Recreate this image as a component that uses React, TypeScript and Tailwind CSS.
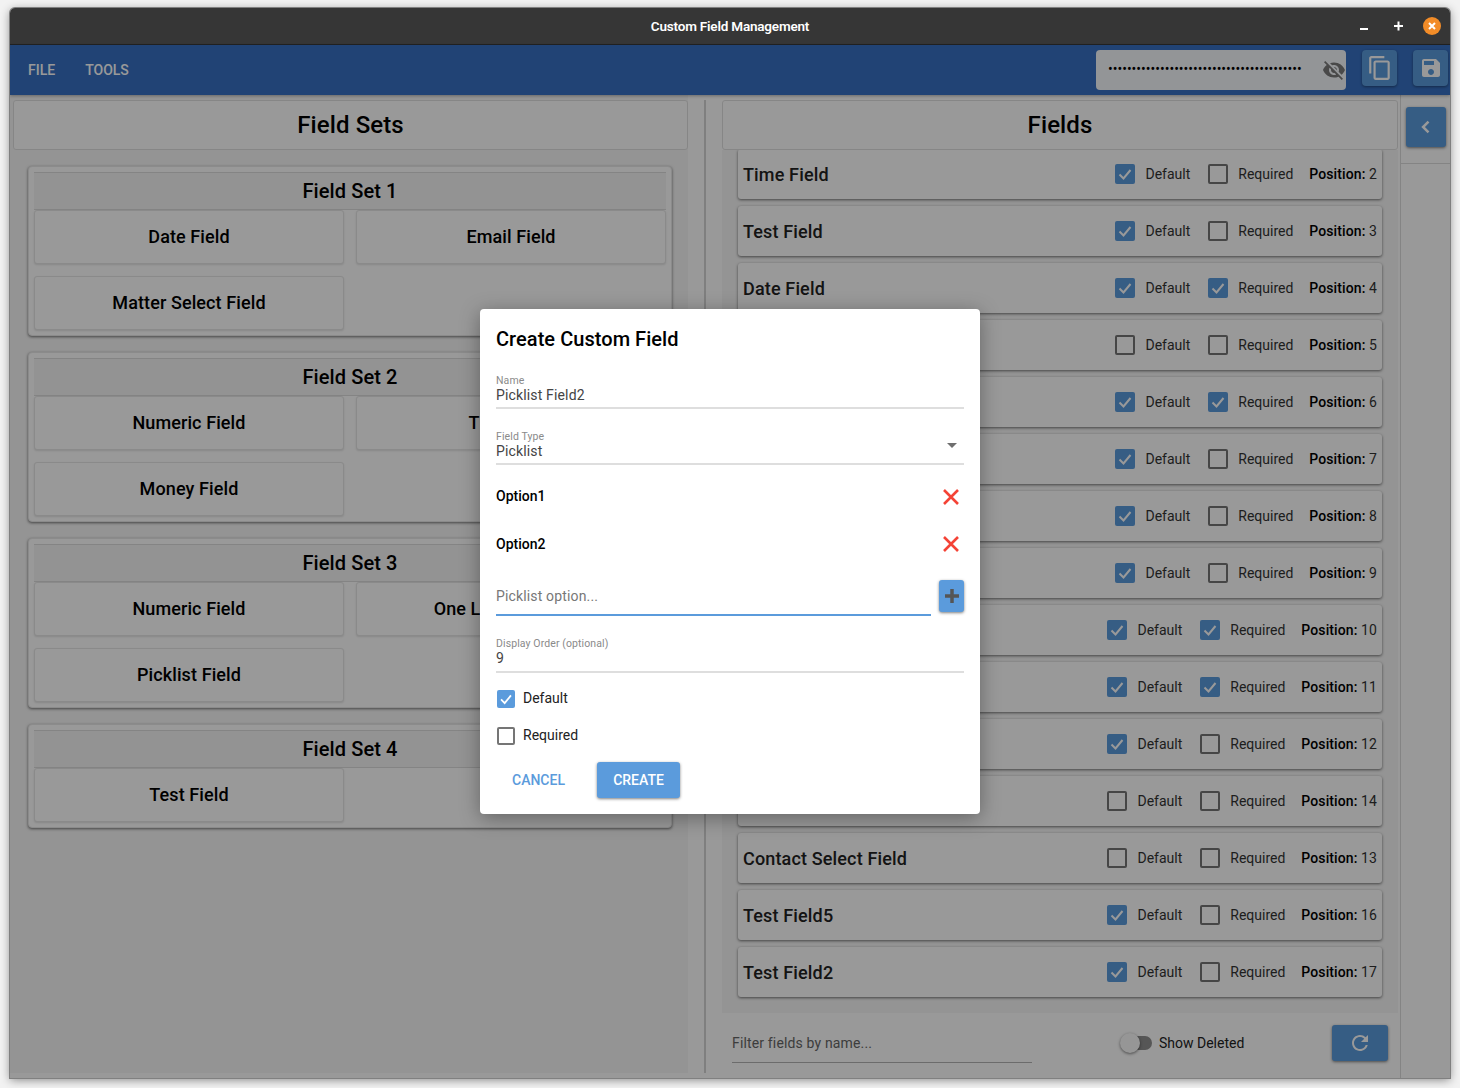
import React from 'react';

// ─── Data ───────────────────────────────────────────────────────────────────

const FIELD_SETS: string[][] = [
  ['Date Field', 'Email Field', 'Matter Select Field'],
  ['Numeric Field', 'Time Field', 'Money Field'],
  ['Numeric Field', 'One Line Text Field', 'Picklist Field'],
  ['Test Field'],
];

interface FieldRow {
  name: string;
  def: boolean;
  req: boolean;
  pos: number;
}

const FIELDS: FieldRow[] = [
  { name: 'Time Field', def: true, req: false, pos: 2 },
  { name: 'Test Field', def: true, req: false, pos: 3 },
  { name: 'Date Field', def: true, req: true, pos: 4 },
  { name: 'Email Field', def: false, req: false, pos: 5 },
  { name: 'Numeric Field', def: true, req: true, pos: 6 },
  { name: 'Money Field', def: true, req: false, pos: 7 },
  { name: 'Picklist Field', def: true, req: false, pos: 8 },
  { name: 'Text Field', def: true, req: false, pos: 9 },
  { name: 'Test Field1', def: true, req: true, pos: 10 },
  { name: 'Test Field3', def: true, req: true, pos: 11 },
  { name: 'Test Field4', def: true, req: false, pos: 12 },
  { name: 'Matter Select Field', def: false, req: false, pos: 14 },
  { name: 'Contact Select Field', def: false, req: false, pos: 13 },
  { name: 'Test Field5', def: true, req: false, pos: 16 },
  { name: 'Test Field2', def: true, req: false, pos: 17 },
];

// ─── Small pieces ───────────────────────────────────────────────────────────

function Check({ on, size = 'w-5 h-5' }: { on: boolean; size?: string }) {
  if (on) {
    return (
      <span className={`${size} shrink-0 rounded-[2px] bg-[#5b9bdc] flex items-center justify-center`}>
        <svg viewBox="0 0 20 20" className="w-full h-full" fill="none" stroke="#fff" strokeWidth="2">
          <path d="M4.5 10.5l4 4 7-8.5" />
        </svg>
      </span>
    );
  }
  return <span className={`${size} shrink-0 rounded-[2px] border-2 border-[#757575] bg-transparent`} />;
}

function DialogField({ label, value, caret, height = 'h-[34px]' }: { label: string; value: string; caret?: boolean; height?: string }) {
  return (
    <div className={`relative ${height} border-b-2 border-[#dedede]`}>
      <div className="text-[10.5px] leading-[12px] tracking-[0.1px] text-[#8a8a8a]">{label}</div>
      <div className="text-[14px] leading-[16px] tracking-[0.15px] text-[#444]">{value}</div>
      {caret && <span className="absolute right-[7px] top-[12px] w-0 h-0 border-x-[5px] border-x-transparent border-t-[5px] border-t-[#6f6f6f]" />}
    </div>
  );
}

function RedX() {
  return (
    <svg viewBox="0 0 16 16" className="w-4 h-4" fill="none" stroke="#f44336" strokeWidth="2.6">
      <path d="M1 1l14 14M15 1L1 15" />
    </svg>
  );
}

// ─── App Component ──────────────────────────────────────────────────────────

export default function App() {
  return (
    <div className="w-[1460px] h-[1088px] bg-[#f2f2f2] pt-2 pl-2.5 overflow-hidden font-['Roboto',sans-serif]">
      <div className="relative w-[1440px] h-[1070px] rounded-t-[5px] overflow-hidden shadow-[0_0_0_1px_#808080,0_2px_10px_rgba(0,0,0,0.45)]">
        {/* ─── Title bar ─── */}
        <div className="relative h-[37px] bg-[#363636] border-b border-[#222] flex items-center justify-center">
          <span className="text-[13.5px] font-semibold text-white tracking-[-0.2px]">Custom Field Management</span>
          <svg viewBox="0 0 88 20" className="absolute right-2 top-2 w-[88px] h-5">
            <path d="M6 13h8" stroke="#fff" strokeWidth="2" />
            <path d="M40 10h9M44.500 5.500v9" stroke="#fff" strokeWidth="2" />
            <circle cx="78" cy="10" r="9" fill="#f28c28" />
            <path d="M75 7l6 6M81 7l-6 6" stroke="#fff" strokeWidth="2" />
          </svg>
        </div>

        {/* ─── App bar ─── */}
        <header className="h-[50px] bg-[#3771c4] flex items-start shadow-[0_1px_3px_rgba(0,0,0,0.3)] relative z-10">
          <nav className="flex items-center h-[50px] pl-[18px] gap-[30px] text-[14px] font-medium text-white">
            <span>FILE</span>
            <span>TOOLS</span>
          </nav>
          <div className="ml-auto flex items-start pt-[5px] pr-[2px]">
            <div className="relative w-[250px] h-10 rounded bg-white/95">
              <input readOnly type="password" value={'x'.repeat(41)} className="w-[220px] h-[38px] pl-3 bg-transparent text-[14px] text-black outline-none" />
              <svg viewBox="0 0 24 24" className="absolute right-0 top-2 w-6 h-6" fill="#7a7a7a">
                <path d="M12 7c2.760 0 5 2.240 5 5 0 .650-.130 1.260-.360 1.830l2.920 2.920c1.510-1.260 2.700-2.890 3.430-4.750-1.730-4.390-6-7.500-11-7.500-1.400 0-2.740.250-3.980.700l2.160 2.160C10.740 7.130 11.350 7 12 7zM2 4.270l2.280 2.280.460.460C3.080 8.300 1.780 10.020 1 12c1.730 4.390 6 7.500 11 7.500 1.550 0 3.030-.300 4.380-.840l.420.420L19.730 22 21 20.730 3.270 3 2 4.270zM7.530 9.800l1.550 1.550c-.050.210-.080.430-.080.650 0 1.660 1.340 3 3 3 .220 0 .440-.030.650-.080l1.550 1.550c-.670.330-1.410.530-2.200.530-2.760 0-5-2.240-5-5 0-.790.200-1.530.530-2.200zm4.310-.780l3.150 3.150.020-.160c0-1.660-1.340-3-3-3l-.170.010z" />
              </svg>
            </div>
            <button className="ml-4 w-[35px] h-9 rounded bg-[#5b9bdc] flex items-center justify-center shadow-[0_1px_3px_rgba(0,0,0,0.4)]">
              <svg viewBox="0 0 24 24" className="w-[26px] h-[26px]" fill="#fff">
                <path d="M16 1H4c-1.100 0-2 .900-2 2v14h2V3h12V1zm3 4H8c-1.100 0-2 .900-2 2v14c0 1.100.900 2 2 2h11c1.100 0 2-.900 2-2V7c0-1.100-.900-2-2-2zm0 16H8V7h11v14z" />
              </svg>
            </button>
            <button className="ml-4 w-[35px] h-9 rounded bg-[#5b9bdc] flex items-center justify-center shadow-[0_1px_3px_rgba(0,0,0,0.4)]">
              <svg viewBox="0 0 24 24" className="w-[24px] h-[24px]" fill="#fff">
                <path d="M17 3H5c-1.110 0-2 .900-2 2v14c0 1.100.890 2 2 2h14c1.100 0 2-.900 2-2V7l-4-4zm-5 16c-1.660 0-3-1.340-3-3s1.340-3 3-3 3 1.340 3 3-1.340 3-3 3zm3-10H5V5h10v4z" />
              </svg>
            </button>
          </div>
        </header>

        {/* ─── Body ─── */}
        <div className="h-[983px] flex bg-white">
          {/* Field sets */}
          <section className="w-[678px] h-[978px] bg-[#f7f7f7] px-[3px] pt-[5px] shrink-0">
            <h2 className="h-[50px] w-[675px] flex items-center justify-center rounded-[3px] border border-[#e0e0e0] bg-white text-[24px] tracking-[0.1px] font-medium text-black">Field Sets</h2>
            <div className="mt-4 ml-[15px] w-[644px] flex flex-col gap-4">
              {FIELD_SETS.map((fields, i) => (
                <div key={i} className="rounded-[4px] bg-white border border-[#e8e8e8] shadow-[0_1px_3px_rgba(0,0,0,0.55)] px-[5px] pt-[5px] pb-[5px]">
                  <div className="h-[38px] flex items-center justify-center border-y border-[#dcdcdc] bg-[#f5f5f5] text-[20px] tracking-[0.1px] font-medium text-black">Field Set {i + 1}</div>
                  <div className="grid grid-cols-2 gap-x-3 gap-y-3">
                    {fields.map((f, j) => (
                      <div key={j} className="h-[54px] pb-px flex items-center justify-center rounded-[3px] border border-[#e6e6e6] bg-white shadow-[0_1px_2px_rgba(0,0,0,0.12)] text-[18px] tracking-[0.1px] font-medium text-black">{f}</div>
                    ))}
                  </div>
                </div>
              ))}
            </div>
          </section>

          {/* Divider */}
          <div className="w-[34px] shrink-0 pl-4 pt-[5px]">
            <div className="w-0.5 h-[973px] bg-[#d4d4d4]" />
          </div>

          {/* Fields */}
          <section className="w-[676px] shrink-0 h-[978px] pt-[5px] flex flex-col">
            <h2 className="relative z-10 h-[50px] shrink-0 flex items-center justify-center rounded-[3px] border border-[#e0e0e0] bg-white text-[24px] tracking-[0.1px] font-medium text-black">Fields</h2>
            <div className="h-[863px] shrink-0 bg-[#f7f7f7] overflow-hidden px-4">
              <div className="-mt-px flex flex-col gap-[7px]">
                {FIELDS.map((f) => (
                  <div key={f.pos} className="h-[50px] shrink-0 flex items-center rounded-[3px] bg-white shadow-[0_1px_3px_rgba(0,0,0,0.55)] pl-[5px] pr-[5px]">
                    <span className="text-[18px] tracking-[0.15px] font-medium text-[#222]">{f.name}</span>
                    <div className="ml-auto flex items-center text-[14px] text-[#333]">
                      <Check on={f.def} />
                      <span className="ml-[10px] mr-[18px]">Default</span>
                      <Check on={f.req} />
                      <span className="ml-[10px] mr-4">Required</span>
                      <span className="tracking-[0.1px]"><b className="font-medium text-black">Position:</b> {f.pos}</span>
                    </div>
                  </div>
                ))}
              </div>
            </div>
            <div className="h-[60px] shrink-0 bg-white flex items-center pl-2.5 relative">
              <div className="w-[300px] h-[37px] mt-[3px] pb-px border-b border-[#b5b5b5] flex items-center text-[14px] tracking-[0.15px] text-[#666]">Filter fields by name...</div>
              <span className="relative ml-[90px] w-[30px] h-3.5 rounded-full bg-[#8f8f8f]">
                <span className="absolute -left-[2px] -top-[3px] w-5 h-5 rounded-full bg-[#fafafa] shadow-[0_1px_3px_rgba(0,0,0,0.5)]" />
              </span>
              <span className="ml-[7px] text-[14px] text-[#222]">Show Deleted</span>
              <button className="absolute left-[610px] top-3 w-14 h-9 rounded-[3px] bg-[#5b9bdc] flex items-center justify-center shadow-[0_1px_3px_rgba(0,0,0,0.5)]">
                <svg viewBox="0 0 24 24" className="w-6 h-6" fill="#fff">
                  <path d="M17.650 6.350A7.958 7.958 0 0 0 12 4c-4.420 0-7.990 3.580-7.990 8s3.570 8 7.990 8c3.730 0 6.840-2.550 7.730-6h-2.080A5.990 5.990 0 0 1 12 18c-3.310 0-6-2.690-6-6s2.690-6 6-6c1.660 0 3.140.690 4.220 1.780L13 11h7V4l-2.350 2.350z" />
                </svg>
              </button>
            </div>
          </section>

          {/* Right rail */}
          <aside className="ml-0.5 w-[50px] shrink-0 border-l border-[#dcdcdc] bg-white">
            <div className="h-[69px] border-b border-[#dcdcdc] pt-3 pl-[5px]">
              <button className="w-10 h-10 rounded-[3px] bg-[#5b9bdc] flex items-center justify-center shadow-[0_1px_3px_rgba(0,0,0,0.5)]">
                <svg viewBox="0 0 24 24" className="w-5 h-5" fill="none" stroke="#fff" strokeWidth="3">
                  <path d="M15 5.500L8.500 12l6.500 6.500" />
                </svg>
              </button>
            </div>
          </aside>
        </div>

        {/* ─── Modal backdrop ─── */}
        <div className="absolute inset-x-0 top-[37px] bottom-0 z-20 bg-black/40" />

        {/* ─── Dialog ─── */}
        <div className="absolute z-30 left-[470px] top-[301px] w-[500px] h-[505px] rounded bg-white shadow-[0_4px_20px_rgba(0,0,0,0.35)] px-4 pt-4">
          <h3 className="text-[20px] leading-7 tracking-[0.05px] font-medium text-black">Create Custom Field</h3>
          <div className="mt-[22px]">
            <DialogField label="Name" value="Picklist Field2" />
          </div>
          <div className="mt-[22px]">
            <DialogField label="Field Type" value="Picklist" caret />
          </div>
          <div className="mt-[15px] h-8 flex items-center justify-between text-[14px] font-medium text-black">
            <span>Option1</span>
            <span className="mr-[5px] mt-0.5"><RedX /></span>
          </div>
          <div className="mt-4 h-8 flex items-center justify-between text-[14px] font-medium text-black">
            <span>Option2</span>
            <span className="mr-[5px]"><RedX /></span>
          </div>
          <div className="mt-3.5 flex items-start gap-2">
            <div className="flex-1 h-[42px] border-b-2 border-[#5b9bdc] pt-[14px] text-[14px] leading-[16px] tracking-[0.15px] text-[#777]">Picklist option...</div>
            <button className="w-[25px] h-8 mt-1.5 rounded-[3px] bg-[#5b9bdc] flex items-center justify-center shadow-[0_1px_3px_rgba(0,0,0,0.5)]">
              <svg viewBox="0 0 16 16" className="w-4 h-4" fill="none" stroke="#555" strokeWidth="3.500">
                <path d="M8 1v14M1 8h14" />
              </svg>
            </button>
          </div>
          <div className="mt-[22px]">
            <DialogField label="Display Order (optional)" value="9" height="h-[35px]" />
          </div>
          <div className="mt-[17px] ml-px flex items-center text-[14px] text-[#222] h-[18px]">
            <Check on size="w-[18px] h-[18px]" />
            <span className="ml-2 -mt-0.5">Default</span>
          </div>
          <div className="mt-[19px] ml-px flex items-center text-[14px] text-[#222] h-[18px]">
            <Check on={false} size="w-[18px] h-[18px]" />
            <span className="ml-2 -mt-0.5">Required</span>
          </div>
          <div className="mt-[17px] flex items-center text-[14px] font-medium">
            <button className="w-[85px] h-9 text-[#5b9bdc]">CANCEL</button>
            <button className="ml-4 w-[83px] h-9 rounded-[3px] bg-[#5b9bdc] text-white shadow-[0_1px_3px_rgba(0,0,0,0.5)]">CREATE</button>
          </div>
        </div>
      </div>
    </div>
  );
}
